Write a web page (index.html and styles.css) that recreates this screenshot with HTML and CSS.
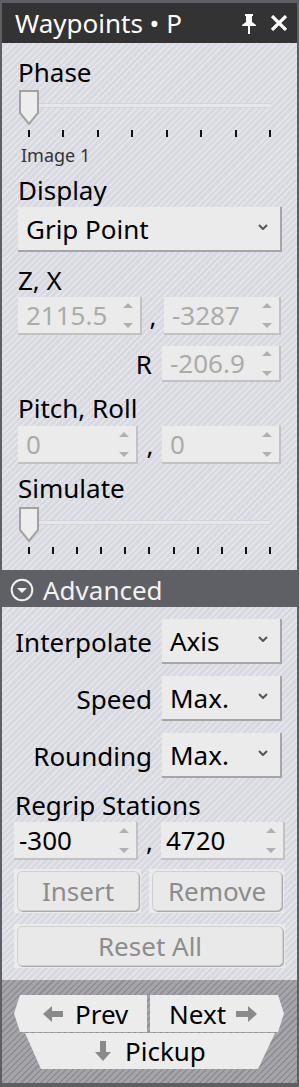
FILE: index.html
```html
<!DOCTYPE html>
<html>
<head>
<meta charset="utf-8">
<link rel="stylesheet" href="styles.css">
</head>
<body>
<div class="frame">
  <header class="titlebar">
    <span class="title">Waypoints • P</span>
    <span class="title-icons">
      <svg class="pin" width="14" height="20" viewBox="0 0 14 20"><path d="M3 0H11V2H10V8L14 11V12H0V11L4 8V2H3Z" fill="#fff"/><rect x="6" y="12" width="2" height="8" fill="#fff"/></svg>
      <svg class="close" width="18" height="16" viewBox="0 0 18 16"><path d="M2 1L16 15M16 1L2 15" stroke="#fff" stroke-width="3.2"/></svg>
    </span>
  </header>

  <section class="panel panel-main">
    <div class="label">Phase</div>
    <div class="slider">
      <svg class="thumb" width="20" height="35" viewBox="0 0 20 35"><path d="M1 1H19V23L10 34L1 23Z" fill="#ededed" stroke="#a2a2a2" stroke-width="2"/></svg>
      <div class="track"></div>
      <div class="ticks"><i></i><i></i><i></i><i></i><i></i><i></i><i></i><i></i></div>
    </div>
    <div class="caption">Image 1</div>
    <div class="label gap-display">Display</div>
    <div class="select select-wide">
      <span>Grip Point</span>
      <svg width="10" height="6" viewBox="0 0 10 6"><path d="M1 1L5 5L9 1" fill="none" stroke="#555" stroke-width="2"/></svg>
    </div>
    <div class="label gap-zx">Z, X</div>
    <div class="pair pair-zx">
      <div class="spin"><span>2115.5</span><svg width="10" height="27" viewBox="0 0 10 27"><path d="M0 6L5 1L10 6Z M0 21L10 21L5 26Z" fill="#b0b0b0"/></svg></div>
      <span class="comma">,</span>
      <div class="spin"><span>-3287</span><svg width="10" height="27" viewBox="0 0 10 27"><path d="M0 6L5 1L10 6Z M0 21L10 21L5 26Z" fill="#b0b0b0"/></svg></div>
    </div>
    <div class="rrow">
      <span class="rlabel">R</span>
      <div class="spin spin-r"><span>-206.9</span><svg width="10" height="27" viewBox="0 0 10 27"><path d="M0 6L5 1L10 6Z M0 21L10 21L5 26Z" fill="#b0b0b0"/></svg></div>
    </div>
    <div class="label gap-pitch">Pitch, Roll</div>
    <div class="pair pair-pitch">
      <div class="spin"><span>0</span><svg width="10" height="27" viewBox="0 0 10 27"><path d="M0 6L5 1L10 6Z M0 21L10 21L5 26Z" fill="#b0b0b0"/></svg></div>
      <span class="comma">,</span>
      <div class="spin"><span>0</span><svg width="10" height="27" viewBox="0 0 10 27"><path d="M0 6L5 1L10 6Z M0 21L10 21L5 26Z" fill="#b0b0b0"/></svg></div>
    </div>
    <div class="label gap-sim">Simulate</div>
    <div class="slider slider-sim">
      <svg class="thumb" width="20" height="35" viewBox="0 0 20 35"><path d="M1 1H19V23L10 34L1 23Z" fill="#ededed" stroke="#a2a2a2" stroke-width="2"/></svg>
      <div class="track"></div>
      <div class="ticks"><i></i><i></i><i></i><i></i><i></i><i></i><i></i><i></i><i></i><i></i><i></i></div>
    </div>
  </section>

  <div class="section-bar">
    <svg width="24" height="24" viewBox="0 0 24 24"><circle cx="12" cy="12" r="10.3" fill="none" stroke="#f0f0f0" stroke-width="2"/><path d="M7 10H17L12 15Z" fill="#f0f0f0"/></svg>
    <span>Advanced</span>
  </div>

  <section class="panel panel-adv">
    <div class="fields">
      <span class="flabel">Interpolate</span>
      <div class="select"><span>Axis</span><svg width="10" height="6" viewBox="0 0 10 6"><path d="M1 1L5 5L9 1" fill="none" stroke="#555" stroke-width="2"/></svg></div>
      <span class="flabel">Speed</span>
      <div class="select"><span>Max.</span><svg width="10" height="6" viewBox="0 0 10 6"><path d="M1 1L5 5L9 1" fill="none" stroke="#555" stroke-width="2"/></svg></div>
      <span class="flabel">Rounding</span>
      <div class="select"><span>Max.</span><svg width="10" height="6" viewBox="0 0 10 6"><path d="M1 1L5 5L9 1" fill="none" stroke="#555" stroke-width="2"/></svg></div>
    </div>
    <div class="label gap-regrip">Regrip Stations</div>
    <div class="pair pair-regrip">
      <div class="spin enabled"><span>-300</span><svg width="10" height="27" viewBox="0 0 10 27"><path d="M0 6L5 1L10 6Z M0 21L10 21L5 26Z" fill="#b0b0b0"/></svg></div>
      <span class="comma">,</span>
      <div class="spin enabled"><span>4720</span><svg width="10" height="27" viewBox="0 0 10 27"><path d="M0 6L5 1L10 6Z M0 21L10 21L5 26Z" fill="#b0b0b0"/></svg></div>
    </div>
    <div class="btn-row">
      <div class="btn-outer"><div class="btn">Insert</div></div>
      <div class="btn-outer"><div class="btn">Remove</div></div>
    </div>
    <div class="btn-outer btn-reset"><div class="btn">Reset All</div></div>
  </section>

  <footer class="nav">
    <div class="nav-row">
      <div class="navbtn prev">
        <svg width="20" height="16" viewBox="0 0 20 16"><path d="M0 8L9 0V5H20V11H9V16Z" fill="#8a8a8a"/></svg>
        <span>Prev</span>
      </div>
      <div class="navbtn next">
        <span>Next</span>
        <svg width="21" height="16" viewBox="0 0 21 16"><path d="M21 8L12 0V5H0V11H12V16Z" fill="#8a8a8a"/></svg>
      </div>
    </div>
    <div class="navbtn pickup">
      <svg width="16" height="20" viewBox="0 0 16 20"><path d="M8 20L0 11H5V0H11V11H16Z" fill="#8a8a8a"/></svg>
      <span>Pickup</span>
    </div>
  </footer>
</div>
</body>
</html>
```

FILE: styles.css
```css
* { box-sizing: border-box; margin: 0; padding: 0; }
body {
  margin: 0;
  background: #5e5f64;
  font-family: "Noto Sans", "Open Sans", sans-serif;
}
.frame {
  width: 299px;
  height: 1087px;
  border-style: solid;
  border-color: #5e5f64;
  border-width: 3px 2px 4px 2px;
  display: flex;
  flex-direction: column;
  background: #5e5f64;
}
.titlebar {
  height: 40px;
  flex: none;
  background: #333333;
  color: #fff;
  display: flex;
  align-items: center;
  justify-content: space-between;
  padding: 0 9px 0 13px;
}
.title { font-size: 26px; line-height: 30px; }
.title-icons { display: flex; align-items: center; gap: 14px; }
.title-icons .pin { margin-top: 2px; }

.panel {
  background-color: #d9dae1;
  background-image: repeating-linear-gradient(135deg, #e3e4ea 0 2px, #d8d9e0 2px 4.5px);
  flex: none;
}
.panel-main { padding: 14px 15px 16px 16px; }
.label { font-size: 26px; line-height: 30px; color: #000; }

.slider {
  position: relative;
  height: 47px;
  margin-top: 3px;
  display: flex;
  flex-direction: column;
}
.slider .thumb { position: absolute; left: 1px; top: 0; }
.track {
  margin: 13px 0 0 21px;
  width: 231px;
  height: 5px;
  background: #e7e7e9;
  border-top: 1px solid #d3d3d8;
  border-bottom: 1px solid #d3d3d8;
}
.ticks {
  margin: 22px 11px 0 10px;
  display: flex;
  justify-content: space-between;
}
.ticks i { display: block; width: 2px; height: 7px; background: #111; }

.caption {
  font-size: 18px;
  line-height: 22px;
  color: #333;
  margin: 7px 0 0 3px;
}
.gap-display { margin-top: 9px; }
.gap-zx { margin-top: 13px; }
.gap-pitch { margin-top: 11px; }
.gap-sim { margin-top: 10px; }
.slider-sim { margin-top: 4px; }

.select {
  height: 45px;
  background: #ebebeb;
  border-right: 2px solid #a6a6a6;
  border-bottom: 2px solid #a6a6a6;
  display: flex;
  align-items: center;
  justify-content: space-between;
  padding: 0 12px 0 8px;
  font-size: 26px;
  color: #000;
}
.select svg { margin-top: -4px; }
.select-wide { margin-top: 2px; }

.pair {
  display: grid;
  margin-top: 2px;
}
.pair-zx { grid-template-columns: 124px 1fr 117px; height: 35px; margin-right: 1px; }
.pair-pitch { grid-template-columns: 120px 1fr 119px; height: 37px; margin-top: 3px; margin-right: 1px; }
.pair-regrip { grid-template-columns: 124px 1fr 124px; height: 37px; margin-top: 2px; }
.comma {
  align-self: center;
  text-align: center;
  font-size: 26px;
  color: #000;
}
.spin {
  height: 100%;
  background: #ebebeb;
  border-right: 2px solid #c2c2c2;
  border-bottom: 2px solid #c2c2c2;
  display: flex;
  align-items: center;
  justify-content: space-between;
  padding: 0 7px 0 8px;
  font-size: 26px;
  color: #ababab;
}
.spin.enabled { color: #000; padding-left: 5px; }
.rrow {
  display: flex;
  justify-content: flex-end;
  align-items: center;
  gap: 10px;
  height: 36px;
  margin: 14px 1px 0 0;
}
.rlabel { font-size: 26px; color: #000; }
.spin-r { width: 119px; }

.section-bar {
  height: 37px;
  flex: none;
  background: #5f6066;
  color: #f2f2f2;
  display: flex;
  align-items: center;
  gap: 9px;
  padding: 2px 0 0 8px;
  font-size: 26px;
}

.panel-adv { padding: 12px 12px 12px 12px; }
.fields {
  display: grid;
  grid-template-columns: 138px 120px;
  column-gap: 10px;
  row-gap: 12px;
}
.flabel {
  font-size: 26px;
  color: #000;
  text-align: right;
  align-self: center;
}
.gap-regrip { margin-top: 12px; margin-left: 1px; }

.btn-row {
  display: grid;
  grid-template-columns: 127px 135px;
  column-gap: 8px;
  height: 44px;
  margin-top: 10px;
}
.btn-outer {
  background: #ebebeb;
  padding: 2px 2px 2px 3px;
}
.btn {
  height: 100%;
  background: #e9e9e9;
  border: 1px solid #d0d0d0;
  border-radius: 5px;
  box-shadow: 1px 1px 0 #ababab;
  display: flex;
  align-items: center;
  justify-content: center;
  font-size: 26px;
  color: #8c8c8c;
}
.btn-reset { height: 44px; margin-top: 11px; }

.nav {
  flex: 1;
  background-color: #a3a3a7;
  background-image: repeating-linear-gradient(135deg, #8f8f93 0 1.5px, #a5a5a9 1.5px 4.5px);
  padding: 15px 11px 0 12px;
}
.nav-row {
  display: flex;
  gap: 3px;
  height: 37px;
}
.navbtn {
  background: #ececec;
  display: flex;
  align-items: center;
  font-size: 26px;
  color: #000;
}
.prev {
  width: 133px;
  padding-left: 29px;
  gap: 12px;
  clip-path: polygon(6px 0, 100% 0, 100% 100%, 6px 100%, 0 50%);
}
.next {
  width: 134px;
  padding-left: 19px;
  gap: 10px;
  clip-path: polygon(0 0, calc(100% - 6px) 0, 100% 50%, calc(100% - 6px) 100%, 0 100%);
}
.pickup {
  width: 250px;
  height: 36px;
  margin: 1px 0 0 11px;
  padding-left: 70px;
  gap: 14px;
  clip-path: polygon(0 0, 100% 0, calc(100% - 17px) 100%, 16px 100%);
}
```
